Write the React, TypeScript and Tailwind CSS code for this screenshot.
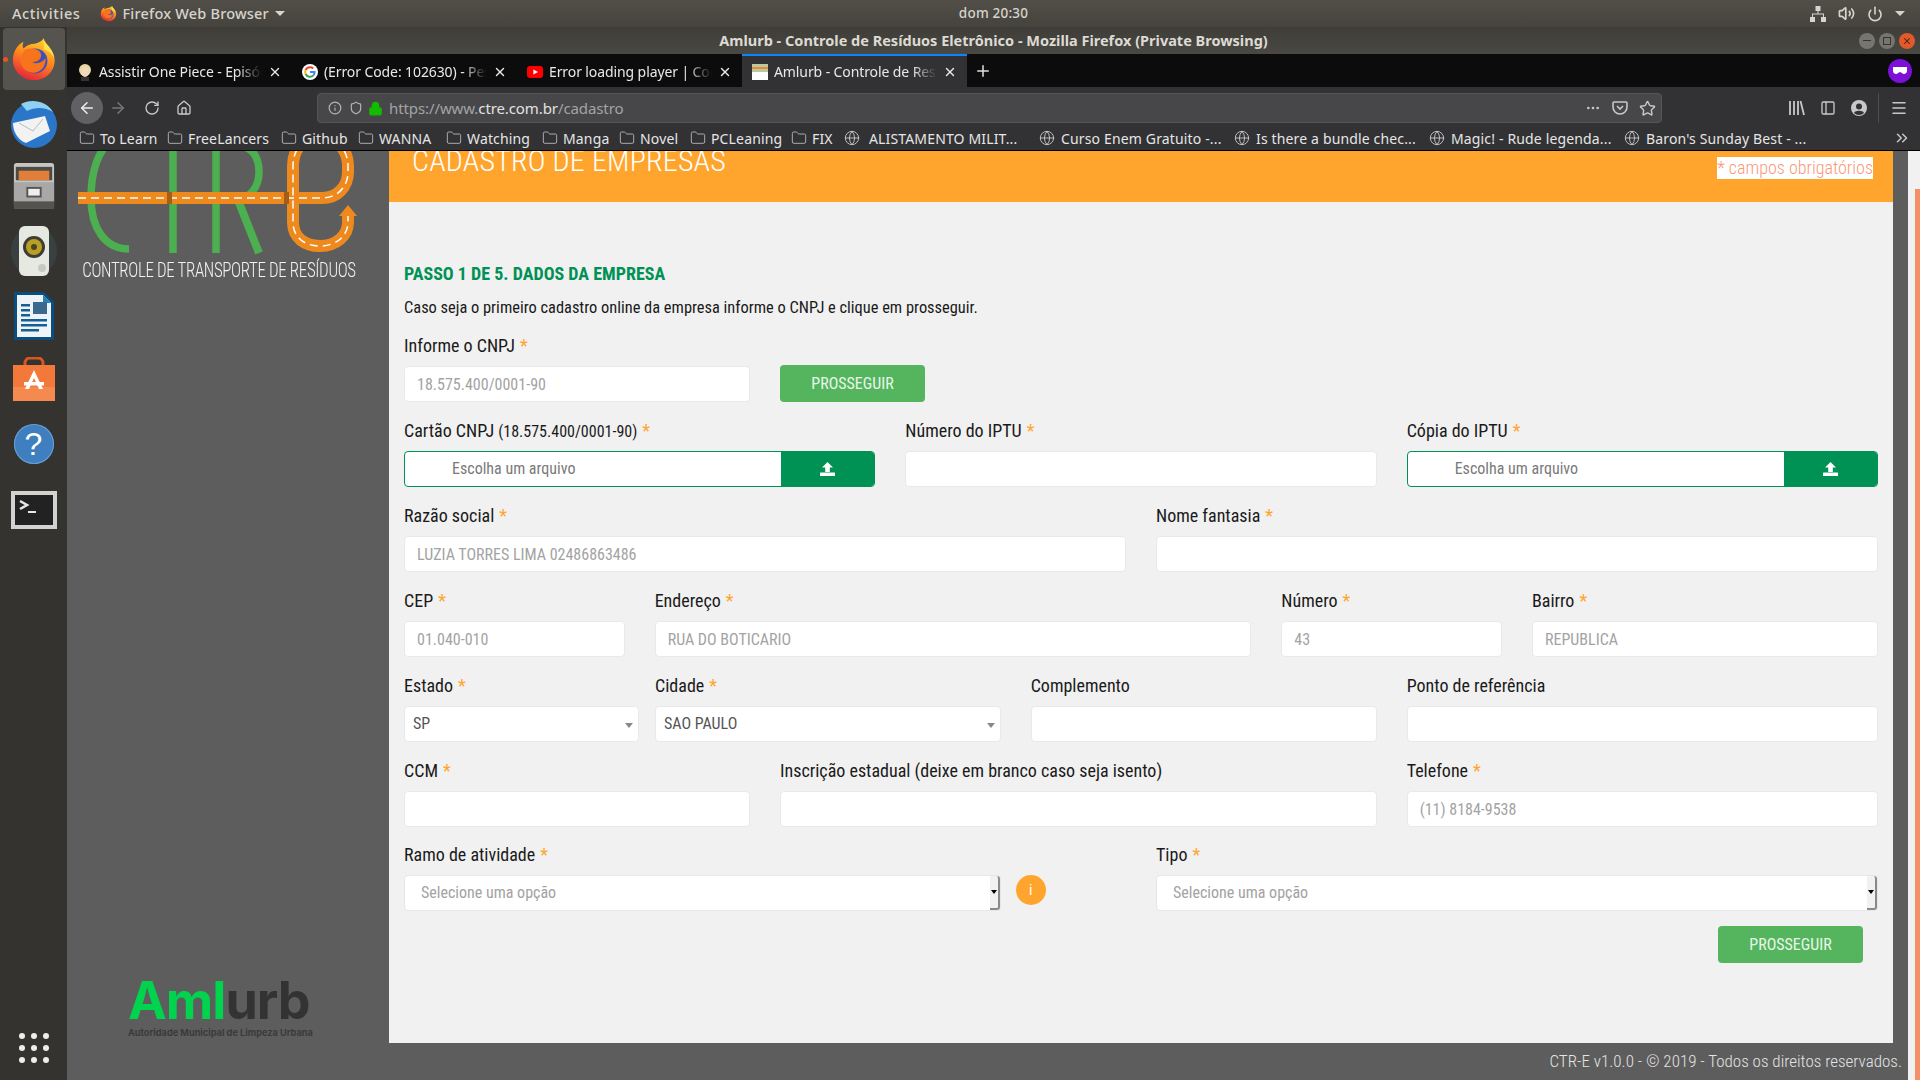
import { ChevronsRight, Ellipsis, Globe, House, Lock, Menu, Plus, RotateCw, Star, X, ArrowLeft, ArrowRight, Info, Shield, Folder, Volume2, Power, PanelLeft } from "lucide-react";

const tabs = [
  { title: "Assistir One Piece - Episódio", icon: "face" },
  { title: "(Error Code: 102630) - Pesquisa", icon: "google" },
  { title: "Error loading player | Como", icon: "youtube" },
  { title: "Amlurb - Controle de Resíduos", icon: "ctre", active: true },
];

const bookmarks = [
  { label: "To Learn", w: "w-[88px]" },
  { label: "FreeLancers", w: "w-[114px]" },
  { label: "Github", w: "w-[77px]" },
  { label: "WANNA", w: "w-[88px]" },
  { label: "Watching", w: "w-[96px]" },
  { label: "Manga", w: "w-[77px]" },
  { label: "Novel", w: "w-[71px]" },
  { label: "PCLeaning", w: "w-[101px]" },
  { label: "FIX", w: "w-[53px]" },
];

const links = [
  { label: "ALISTAMENTO MILIT...", gap: "gap-[9px]" },
  { label: "Curso Enem Gratuito -...", gap: "gap-[6px]" },
  { label: "Is there a bundle chec...", gap: "gap-[6px]" },
  { label: "Magic! - Rude legenda...", gap: "gap-[6px]" },
  { label: "Baron's Sunday Best - ...", gap: "gap-[6px]" },
];

function FirefoxIcon({ size }: { size: number }) {
  return (
    <svg width={size} height={size} viewBox="0 0 48 48">
      <defs>
        <linearGradient id={`ff${size}`} x1="0.7" y1="0" x2="0.3" y2="1">
          <stop offset="0" stopColor="#ffd12e" />
          <stop offset="0.45" stopColor="#ff8a1e" />
          <stop offset="1" stopColor="#e5213a" />
        </linearGradient>
      </defs>
      <path d="M34 2c1 6 9 10 11 19 3 13-7 25-21 25C11 46 2 36 2 25 2 16 7 9 13 6c-1 3-1 5 0 7 3-3 7-5 12-5 4-1 8-3 9-6z" fill={`url(#ff${size})`} />
      <circle cx="25" cy="26" r="13" fill="#3d52b8" />
      <path d="M15 14c6-2 14-1 16 4 2 6-4 10-9 9 4 3 11 1 14-4 1 10-7 17-15 15-7-1-12-8-11-14 1-4 3-8 5-10z" fill="#f7731c" />
      <path d="M33 4c4 5 11 10 12 19-3-6-7-8-11-9 1-3 0-7-1-10z" fill="#ffe04a" />
    </svg>
  );
}

function CtreFavicon() {
  return (
    <svg width="16" height="16" viewBox="0 0 16 16">
      <rect width="16" height="16" fill="#fff" />
      <rect width="16" height="8" fill="#b9c9a8" />
      <rect y="3" width="16" height="2" fill="#f08a24" />
    </svg>
  );
}

function TabIcon({ kind }: { kind: string }) {
  if (kind === "face") {
    return (
      <svg width="16" height="18" viewBox="0 0 16 18">
        <circle cx="8" cy="7" r="6" fill="#e8d9a0" />
        <ellipse cx="8" cy="9" rx="4" ry="5" fill="#f2d8bd" />
        <rect x="4" y="14" width="8" height="4" fill="#333" />
      </svg>
    );
  }
  if (kind === "google") {
    return (
      <svg width="16" height="16" viewBox="0 0 16 16">
        <circle cx="8" cy="8" r="8" fill="#fff" />
        <path d="M8 3.2a4.8 4.8 0 0 1 3.2 1.2" stroke="#ea4335" strokeWidth="2" fill="none" />
        <path d="M3.6 6A4.8 4.8 0 0 1 8 3.2" stroke="#ea4335" strokeWidth="2" fill="none" />
        <path d="M3.6 10A4.8 4.8 0 0 1 3.6 6" stroke="#fbbc05" strokeWidth="2" fill="none" />
        <path d="M11.4 11.4A4.8 4.8 0 0 1 3.6 10" stroke="#34a853" strokeWidth="2" fill="none" />
        <path d="M8 8h4.6a4.8 4.8 0 0 1-1.2 3.4" stroke="#4285f4" strokeWidth="2" fill="none" />
      </svg>
    );
  }
  if (kind === "youtube") {
    return (
      <svg width="16" height="16" viewBox="0 0 16 16">
        <rect y="2" width="16" height="12" rx="3" fill="#f00" />
        <path d="M6.4 5.4 11 8l-4.6 2.6z" fill="#fff" />
      </svg>
    );
  }
  return <CtreFavicon />;
}

function Dock() {
  return (
    <aside className="flex h-full w-[67px] shrink-0 flex-col items-center bg-[#34332f]">
      <div className="relative mt-[1px] flex h-[62px] w-[62px] items-center justify-center rounded bg-[#55544f]">
        <span className="absolute top-[29px] left-0 h-[5px] w-[5px] rounded-full bg-[#e95420]" />
        <FirefoxIcon size={46} />
      </div>
      <svg className="mt-[9px]" width="50" height="50" viewBox="0 0 50 50">
        <circle cx="25" cy="26" r="23" fill="#2a76c9" />
        <path d="M12 5c10-6 26-3 32 8-8-5-18-5-26-1z" fill="#8fd0f5" />
        <path d="M4 24l32-7 5 15-24 12C9 41 4 33 4 24z" fill="#f2f2f2" />
        <path d="M10 24l14 8 10-12" stroke="#b5bcc5" fill="none" />
      </svg>
      <svg className="mt-[12px]" width="44" height="50" viewBox="0 0 46 50">
        <rect x="2" y="1" width="42" height="48" rx="3" fill="#c5c5c3" />
        <rect x="4" y="5" width="38" height="14" fill="#4c4a45" />
        <rect x="7" y="9" width="32" height="10" fill="#e07f3c" />
        <rect x="2" y="21" width="42" height="20" fill="#a8a8a6" />
        <rect x="16" y="27" width="14" height="9" fill="#eee" stroke="#555" strokeWidth="2" />
        <rect x="2" y="41" width="42" height="8" fill="#55534f" />
      </svg>
      <svg className="mt-[14px]" width="50" height="52" viewBox="0 0 50 52">
        <ellipse cx="25" cy="26" rx="23" ry="25" fill="#3e4a50" opacity="0.6" />
        <rect x="10" y="1" width="30" height="50" rx="6" fill="#e6e8e2" />
        <circle cx="25" cy="22" r="11" fill="#3d3c35" />
        <circle cx="25" cy="22" r="8" fill="#b7a024" />
        <circle cx="25" cy="22" r="3" fill="#4a4520" />
        <circle cx="33" cy="43" r="4" fill="#c6c8c2" />
      </svg>
      <svg className="mt-[15px]" width="42" height="48" viewBox="0 0 42 48">
        <path d="M1 0h30l10 10v38H1z" fill="#0a4d7e" />
        <path d="M4 3h26l8 8v34H4z" fill="#eef3f7" />
        <path d="M30 3l8 8h-8z" fill="#2780b8" />
        <rect x="8" y="12" width="9" height="2.5" fill="#155f94" />
        <rect x="8" y="17" width="9" height="2.5" fill="#155f94" />
        <rect x="8" y="22" width="9" height="2.5" fill="#155f94" />
        <rect x="20" y="10" width="14" height="12" fill="#3c6a8c" />
        <rect x="8" y="27" width="26" height="2.5" fill="#155f94" />
        <rect x="8" y="32" width="26" height="2.5" fill="#155f94" />
        <rect x="8" y="37" width="18" height="2.5" fill="#155f94" />
      </svg>
      <svg className="mt-[17px]" width="42" height="44" viewBox="0 0 42 44">
        <path d="M12 12V6a5 5 0 0 1 5-5h8a5 5 0 0 1 5 5v6" stroke="#d9561f" strokeWidth="3" fill="none" />
        <rect y="8" width="42" height="36" fill="#f2793a" />
        <rect y="30" width="42" height="14" fill="#f58a50" />
        <path d="M21 13l9 19h-4l-5-11-5 11h-4z" fill="#fff" />
        <rect x="11" y="25" width="20" height="3.5" fill="#fff" />
      </svg>
      <div className="mt-[23px] flex h-[40px] w-[40px] items-center justify-center rounded-full bg-[#3f7fc0] text-[32px] leading-none font-normal text-white shadow-[inset_0_0_0_1px_#6a9fd4] [font-family:'Liberation_Sans',sans-serif]">
        ?
      </div>
      <svg className="mt-[27px]" width="46" height="38" viewBox="0 0 46 38">
        <rect width="46" height="38" fill="#d2d2d0" />
        <rect x="4" y="4" width="38" height="30" fill="#222" />
        <path d="M9 10l7 4-7 4" stroke="#e8e8e8" strokeWidth="2.5" fill="none" />
        <rect x="17" y="20" width="8" height="2" fill="#e8e8e8" />
      </svg>
      <div className="mt-auto mb-[17px] grid grid-cols-3 gap-x-[6px] gap-y-[6px]">
        {Array.from({ length: 9 }).map((_, i) => (
          <span key={i} className="h-[6px] w-[6px] rounded-full bg-[#eeeeec]" />
        ))}
      </div>
    </aside>
  );
}

const ROAD = "M78 198H322C338 198 348 186 348 172V166C348 148 334 136 320 136C305 136 293 148 293 166V222C293 238 305 246 320 246C336 246 348 236 348 222V216";

function CtreLogo() {
  return (
    <svg width="322" height="104" viewBox="67 151 322 104" className="shrink-0">
      <g fill="none" stroke="#4caf50" strokeWidth="7.5">
        <path d="M112 140C98 150 91 172 91 198c0 30 14 51 38 51" />
        <path d="M173 140v113" />
        <path d="M216 140v113" />
        <path d="M216 146h22c14 0 21 11 21 26 0 14-8 26-22 28" />
        <path d="M238 200l21 53" strokeWidth="8" />
      </g>
      <path d={ROAD} fill="none" stroke="#ee8a1d" strokeWidth="12" />
      <path d="M348 205l9 11h-18z" fill="#ee8a1d" />
      <path d={ROAD} fill="none" stroke="#fff" strokeWidth="1.5" strokeDasharray="8 5" />
      <rect x="167" y="192" width="5" height="12" fill="#a55e15" />
      <rect x="284" y="192" width="5" height="12" fill="#a55e15" />
    </svg>
  );
}

function Req() {
  return <span className="ml-[5px] text-[#ffa52d]">*</span>;
}

function Field({ label, required, value, className }: { label: string; required?: boolean; value?: string; className?: string }) {
  return (
    <div className={className}>
      <label className="mb-[8px] block h-[24px] text-[18px] leading-[24px] font-normal text-[#1a1a1a]">
        {label}
        {required && <Req />}
      </label>
      <input
        placeholder={value}
        className="block h-[36px] w-full rounded-[4px] border border-[#e9e9e9] bg-white px-[12px] text-[16px] text-[#555] placeholder:text-[#a3a3a3]"
      />
    </div>
  );
}

function UploadGlyph() {
  return (
    <svg width="15" height="14" viewBox="0 0 15 14">
      <path d="M7.5 0 13 5.5H9.8V10H5.2V5.5H2z" fill="#fff" />
      <rect y="10.5" width="15" height="3.5" rx="0.5" fill="#fff" />
    </svg>
  );
}

function FileField({ label, className }: { label: React.ReactNode; className?: string }) {
  return (
    <div className={className}>
      <label className="mb-[8px] block h-[24px] text-[18px] leading-[24px] text-[#1a1a1a]">
        {label}
        <Req />
      </label>
      <div className="flex h-[36px] overflow-hidden rounded-[4px] border border-[#009155] bg-white">
        <div className="flex flex-1 items-center pl-[47px] text-[16px] text-[#7a7a7a]">Escolha um arquivo</div>
        <div className="flex w-[93px] items-center justify-center bg-[#009155]">
          <UploadGlyph />
        </div>
      </div>
    </div>
  );
}

function SelectField({ label, value, className }: { label: string; value: string; className?: string }) {
  return (
    <div className={className}>
      <label className="mb-[8px] block h-[24px] text-[18px] leading-[24px] text-[#1a1a1a]">
        {label}
        <Req />
      </label>
      <div className="flex h-[36px] items-center justify-between rounded-[4px] border border-[#e9e9e9] bg-white pr-[5px] pl-[8px] text-[16px] text-[#555]">
        {value}
        <span className="mt-[2px] h-0 w-0 border-x-[4px] border-t-[5px] border-x-transparent border-t-[#888]" />
      </div>
    </div>
  );
}

function SpinSelect({ label, className }: { label: string; className?: string }) {
  return (
    <div className={className}>
      <label className="-mt-[1px] mb-[8px] block h-[24px] text-[18px] leading-[24px] text-[#1a1a1a]">
        {label}
        <Req />
      </label>
      <div className="flex h-[36px] items-stretch rounded-[4px] border border-[#e6e6e6] bg-white text-[16px] text-[#a3a3a3]">
        <div className="flex flex-1 items-center pl-[16px]">Selecione uma opção</div>
        <div className="flex w-[10px] items-center justify-center rounded-r-[3px] border-r-2 border-b-2 border-[#8a8a8a] bg-[#f1f1f1]">
          <span className="h-0 w-0 border-x-[3px] border-t-[4px] border-x-transparent border-t-black" />
        </div>
      </div>
    </div>
  );
}

function SubmitButton({ className }: { className?: string }) {
  return (
    <button className={`flex h-[37px] w-[145px] items-center justify-center rounded-[4px] bg-[#55b55e] text-[16px] text-[#e9f7ea] ${className ?? ""}`}>
      PROSSEGUIR
    </button>
  );
}

export default function App() {
  return (
    <div className="flex h-[1080px] w-[1920px] flex-col overflow-hidden bg-[#34332f] [font-family:'Noto_Sans',sans-serif]">
      {/* gnome top bar */}
      <header className="grid h-[27px] shrink-0 grid-cols-[1fr_auto_1fr] items-center bg-gradient-to-b from-[#524f48] to-[#45433d] pl-[67px] text-[13.5px] font-medium tracking-[0.2px] text-[#d6d4cd]">
        <div className="-ml-[67px] flex items-center text-[14.5px]">
          <span className="ml-[12px] tracking-[0.6px]">Activities</span>
          <span className="ml-[20px]">
            <FirefoxIcon size={17} />
          </span>
          <span className="ml-[5px]">Firefox Web Browser</span>
          <span className="ml-[6px] h-0 w-0 border-x-[5px] border-t-[5px] border-x-transparent border-t-[#d6d4cd]" />
        </div>
        <div>dom 20:30</div>
        <div className="flex items-center justify-end gap-[12px] pr-[15px]">
          <svg width="16" height="16" viewBox="0 0 16 16" fill="#d6d4cd">
            <rect x="5.5" y="0" width="5" height="5" />
            <rect x="0" y="11" width="5" height="5" />
            <rect x="11" y="11" width="5" height="5" />
            <path d="M7.5 5h1v2.5h5.5V11h-1V8.5H3V11H2V7.5h5.5z" />
          </svg>
          <Volume2 size={17} strokeWidth={2.4} />
          <Power size={16} strokeWidth={2.4} />
          <span className="h-0 w-0 border-x-[5px] border-t-[5px] border-x-transparent border-t-[#d6d4cd]" />
        </div>
      </header>

      <div className="flex min-h-0 flex-1">
        <Dock />

        <div className="flex min-w-0 flex-1 flex-col">
          {/* window title */}
          <div className="grid h-[27px] shrink-0 grid-cols-[1fr_auto_1fr] items-center bg-gradient-to-b from-[#3f3d38] to-[#4a4843] text-[14.5px] font-bold text-[#dcdad3]">
            <div />
            <div>Amlurb - Controle de Resíduos Eletrônico - Mozilla Firefox (Private Browsing)</div>
            <div className="flex items-center justify-end gap-[4px] pr-[5px]">
              <span className="flex h-[16px] w-[16px] items-center justify-center rounded-full bg-[#77756f]">
                <span className="h-[1px] w-[8px] bg-[#35342f]" />
              </span>
              <span className="flex h-[16px] w-[16px] items-center justify-center rounded-full bg-[#77756f]">
                <span className="h-[8px] w-[8px] border border-[#35342f]" />
              </span>
              <span className="flex h-[16px] w-[16px] items-center justify-center rounded-full bg-[#e2592a]">
                <X size={10} color="#4a2315" strokeWidth={2.5} />
              </span>
            </div>
          </div>

          {/* tabs */}
          <div className="flex h-[33px] shrink-0 items-stretch bg-[#0c0c0c] text-[14px] text-[#e8e8e8]">
            {tabs.map((tab) => (
              <div
                key={tab.title}
                className={`flex w-[225px] items-center border-t-2 pr-[10px] pl-[10px] ${tab.active ? "border-[#0a84ff] bg-[#323234]" : "border-transparent border-r-[#444]"}`}
              >
                <span className="flex w-[16px] shrink-0 justify-center">
                  <TabIcon kind={tab.icon} />
                </span>
                <span className="ml-[6px] min-w-0 flex-1 overflow-hidden whitespace-nowrap tracking-[-0.1px] [mask-image:linear-gradient(to_right,black_85%,transparent)]">
                  {tab.title}
                </span>
                <X size={14} strokeWidth={2.4} className="ml-[6px] shrink-0" />
              </div>
            ))}
            <div className="ml-[7px] flex items-center">
              <Plus size={18} strokeWidth={2} color="#e0e0e0" />
            </div>
            <div className="ml-auto flex items-center pr-[8px]">
              <span className="flex h-[24px] w-[24px] items-center justify-center rounded-full bg-[#7c10d8]">
                <svg width="16" height="8" viewBox="0 0 16 8">
                  <path d="M1 0h14v4c0 3-4 4-5 2l-2-1-2 1C5 8 1 7 1 4z" fill="#fff" />
                </svg>
              </span>
            </div>
          </div>

          {/* nav bar */}
          <div className="flex h-[39px] shrink-0 items-center bg-[#323234] pt-[3px] text-[#c8c8c8]">
            <span className="ml-[4px] flex h-[32px] w-[32px] items-center justify-center rounded-full bg-[#616163] text-[#eee]">
              <ArrowLeft size={18} />
            </span>
            <ArrowRight size={18} className="ml-[6px] text-[#77777a]" />
            <RotateCw size={16} className="ml-[17px]" />
            <House size={16} className="ml-[16px]" />
            <div className="ml-[125px] flex h-[30px] w-[1345px] items-center rounded-[4px] border border-[#565658] bg-[#474749] pr-[5px] pl-[10px] text-[15px] tracking-[-0.1px]">
              <Info size={14} className="text-[#b5b5b5]" />
              <Shield size={14} className="ml-[7px] text-[#b5b5b5]" />
              <Lock size={15} className="ml-[5px] fill-[#12bc00] text-[#12bc00]" />
              <span className="ml-[6px] text-[#a3a3a5]">
                https://www.<span className="text-[#e2e2e2]">ctre.com.br</span>/cadastro
              </span>
              <span className="ml-auto flex items-center gap-[11px]">
                <Ellipsis size={16} />
                <svg width="16" height="16" viewBox="0 0 16 16" fill="none" stroke="#c8c8c8" strokeWidth="1.6">
                  <path d="M2 2h12a1 1 0 0 1 1 1v4a7 7 0 0 1-14 0V3a1 1 0 0 1 1-1z" />
                  <path d="M5 6l3 3 3-3" />
                </svg>
                <Star size={17} />
              </span>
            </div>
            <svg width="17" height="16" viewBox="0 0 17 16" className="ml-[126px]" fill="none" stroke="#c8c8c8" strokeWidth="1.8">
              <path d="M2 1v14M6 1v14M10 1v14M12.5 1l3.5 14" />
            </svg>
            <PanelLeft size={16} className="ml-[15px]" />
            <svg width="16" height="16" viewBox="0 0 16 16" className="ml-[15px]">
              <circle cx="8" cy="8" r="8" fill="#c8c8c8" />
              <circle cx="8" cy="6.5" r="3" fill="#323234" />
              <path d="M3 13c1-3 9-3 10 0a7 7 0 0 1-10 0z" fill="#323234" />
            </svg>
            <span className="ml-[11px] h-[30px] w-px bg-[#4e4e50]" />
            <Menu size={18} className="ml-[11px]" />
          </div>

          {/* bookmarks */}
          <div className="flex h-[25px] shrink-0 items-center border-b border-black bg-[#323234] pl-[12px] text-[14px] tracking-[0.15px] text-[#e6e6e6]">
            {bookmarks.map((b) => (
              <div key={b.label} className={`flex ${b.w} shrink-0 items-center gap-[5px]`}>
                <Folder size={16} strokeWidth={1.2} className="shrink-0 text-[#c8c8c8]" />
                <span className="whitespace-nowrap">{b.label}</span>
              </div>
            ))}
            {links.map((b) => (
              <div key={b.label} className={`flex w-[195px] shrink-0 items-center ${b.gap}`}>
                <Globe size={16} strokeWidth={1.4} className="shrink-0 text-[#c8c8c8]" />
                <span className="whitespace-nowrap">{b.label}</span>
              </div>
            ))}
            <ChevronsRight size={18} className="mr-[9px] ml-auto text-[#c8c8c8]" />
          </div>

          {/* page */}
          <main className="flex min-h-0 flex-1 bg-[#5d5d5d] [font-family:Roboto,sans-serif] [font-stretch:condensed]">
            <aside className="flex w-[322px] shrink-0 flex-col">
              <CtreLogo />
              <div className="mt-[3px] origin-left scale-x-[0.845] pl-[18px] text-[20px] leading-[24px] font-light tracking-[-0.4px] whitespace-nowrap text-[#f2f2f2]">
                CONTROLE DE TRANSPORTE DE RESÍDUOS
              </div>
              <div className="mt-auto mb-[41px] pl-[61px]">
                <div className="text-[52px] leading-[46px] font-bold tracking-[-1px] [font-family:Inter,sans-serif]">
                  <span className="text-[#00d34d]">Aml</span>
                  <span className="text-[#333]">urb</span>
                </div>
                <div className="mt-[3px] text-[9.2px] leading-[12px] font-bold whitespace-nowrap text-[#3a3a3a] [font-family:Inter,sans-serif]">
                  Autoridade Municipal de Limpeza Urbana
                </div>
              </div>
            </aside>

            <section className="flex w-[1504px] shrink-0 flex-col">
              <div className="flex h-[51px] shrink-0 items-start justify-between overflow-hidden bg-[#ffa52d] pr-[20px] pl-[23px]">
                <h1 className="-mt-[10px] text-[30px] leading-[40px] font-light tracking-[0.2px] whitespace-nowrap text-white">CADASTRO DE EMPRESAS</h1>
                <span className="mt-[6px] bg-white text-[18px] leading-[22px] font-light text-[#f79a77]">* campos obrigatórios</span>
              </div>

              <div className="flex-1 bg-[#f1f1f1] pt-[62px] pr-[15px] pl-[15px]">
                <h2 className="text-[18px] leading-[20px] font-bold text-[#009155]">PASSO 1 DE 5. DADOS DA EMPRESA</h2>
                <p className="mt-[12px] mb-[14px] text-[16.4px] leading-[24px] text-[#1a1a1a]">
                  Caso seja o primeiro cadastro online da empresa informe o CNPJ e clique em prosseguir.
                </p>

                <div className="grid grid-cols-12 gap-x-[30px] gap-y-[17px]">
                  <Field className="col-span-3" label="Informe o CNPJ" required value="18.575.400/0001-90" />
                  <div className="col-span-9 flex items-end">
                    <SubmitButton />
                  </div>

                  <FileField
                    className="col-span-4"
                    label={
                      <>
                        Cartão CNPJ <span className="text-[16px]">(18.575.400/0001-90)</span>
                      </>
                    }
                  />
                  <Field className="col-span-4" label="Número do IPTU" required />
                  <FileField className="col-span-4" label="Cópia do IPTU" />

                  <Field className="col-span-6" label="Razão social" required value="LUZIA TORRES LIMA 02486863486" />
                  <Field className="col-span-6" label="Nome fantasia" required />

                  <Field className="col-span-2" label="CEP" required value="01.040-010" />
                  <Field className="col-span-5" label="Endereço" required value="RUA DO BOTICARIO" />
                  <Field className="col-span-2" label="Número" required value="43" />
                  <Field className="col-span-3" label="Bairro" required value="REPUBLICA" />

                  <div className="col-span-5 flex gap-[16px]">
                    <SelectField className="w-[235px]" label="Estado" value="SP" />
                    <SelectField className="flex-1" label="Cidade" value="SAO PAULO" />
                  </div>
                  <Field className="col-span-3" label="Complemento" />
                  <Field className="col-span-4" label="Ponto de referência" />

                  <Field className="col-span-3" label="CCM" required />
                  <Field className="col-span-5" label="Inscrição estadual (deixe em branco caso seja isento)" />
                  <Field className="col-span-4" label="Telefone" required value="(11) 8184-9538" />

                  <SpinSelect className="col-span-5" label="Ramo de atividade" />
                  <div className="col-span-1 flex items-end">
                    <span className="mb-[6px] -ml-[15px] flex h-[30px] w-[30px] items-center justify-center rounded-full bg-[#ffa52d] text-[15px] text-white">i</span>
                  </div>
                  <SpinSelect className="col-span-6" label="Tipo" />
                </div>

                <div className="mt-[15px] flex justify-end pr-[15px]">
                  <SubmitButton />
                </div>
              </div>

              <footer className="-mr-[9px] flex h-[37px] shrink-0 items-center justify-end text-[17px] font-light whitespace-nowrap text-[#e4e4e4]">
                CTR-E v1.0.0 - © 2019 - Todos os direitos reservados.
              </footer>
            </section>

            <div className="ml-[15px] flex w-[12px] shrink-0 justify-end bg-[#f1f1f1] pt-[38px]">
              <div className="h-full w-[5px] bg-[#f48f68]" />
            </div>
          </main>
        </div>
      </div>
    </div>
  );
}
